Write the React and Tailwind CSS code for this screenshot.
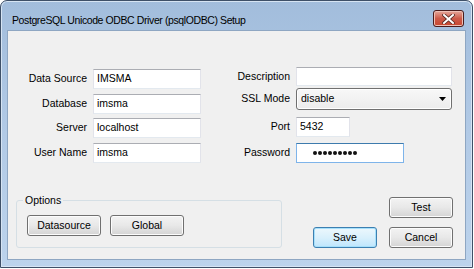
import React from 'react';

const font = { fontFamily: '"Liberation Sans", Arial, sans-serif' };

function TextBox({ value, className = '', focused = false, password = false }) {
    return (
        <div
            className={`h-[20px] bg-white border flex items-center px-[3px] text-[10.5px] text-black ${
                focused
                    ? 'border-[#7eb4ea] border-t-[#3d7bad]'
                    : 'border-[#e2e3ea] border-t-[#abadb3] border-b-[#e3e9ef]'
            } ${className}`}
        >
            {password ? (
                <div className="flex gap-[1px] pl-[13px]">
                    {[0, 1, 2, 3, 4, 5, 6, 7, 8].map((i) => (
                        <div key={i} className="w-[4px] h-[4px] rounded-full bg-[#111]" />
                    ))}
                </div>
            ) : (
                value
            )}
        </div>
    );
}

function WinButton({ children, className = '', isDefault = false }) {
    return (
        <div
            className={`h-[21px] rounded-[3px] border flex items-center justify-center text-[10.5px] text-black ${
                isDefault
                    ? 'border-[#3c7fb1] bg-gradient-to-b from-[#ecf7fd] via-[#d9f0fc] to-[#bee6fd] shadow-[inset_0_0_0_1px_#a6e0fb]'
                    : 'border-[#707070] bg-gradient-to-b from-[#f3f3f3] via-[#e8e8e8] to-[#d4d4d4] shadow-[inset_0_0_0_1px_#fcfcfc]'
            } ${className}`}
        >
            {children}
        </div>
    );
}

function Row({ label, children, labelWidth, className = '' }) {
    return (
        <div className={`flex items-center ${className}`}>
            <div className="text-right text-[10.5px] text-black shrink-0" style={{ width: labelWidth }}>
                {label}
            </div>
            {children}
        </div>
    );
}

export default function App() {
    return (
        <div className="w-[474px] h-[269px] bg-white" style={font}>
            <div className="w-[473px] h-[268px] rounded-t-[7px] border border-[#3e5068] bg-gradient-to-b from-[#a2bddc] via-[#b2cae6] to-[#bcd3ec] shadow-[inset_0_0_0_1px_#d6e4f3] flex flex-col px-[6px] pb-[7px]">
                {/* title bar */}
                <div className="h-[29px] flex items-start pl-[5px] pr-[2px]">
                    <div className="text-[10.5px] leading-[13px] tracking-[-0.4px] text-black mt-[13px]">
                        PostgreSQL Unicode ODBC Driver (psqlODBC) Setup
                    </div>
                    <div className="ml-auto mt-[9px] w-[31px] h-[17px] rounded-[3px] border border-[#4a1c1c] bg-gradient-to-b from-[#e4a89c] via-[#cc5a49] to-[#c8462e] shadow-[inset_0_0_0_1px_#eec0b6] flex items-center justify-center">
                        <svg width="13" height="10" viewBox="0 0 13 10">
                            <path d="M2 1 L11 9 M11 1 L2 9" stroke="#5a2a24" strokeWidth="3.6" strokeLinecap="square" />
                            <path d="M2 1 L11 9 M11 1 L2 9" stroke="#ffffff" strokeWidth="2" strokeLinecap="square" />
                        </svg>
                    </div>
                </div>

                {/* client area */}
                <div className="flex-1 bg-[#f0f0f0] border border-[#8ea6c2] flex flex-col">
                    <div className="flex pt-[36px]">
                        {/* left fields */}
                        <div className="flex flex-col pt-[2px] gap-[4.5px]">
                            <Row label="Data Source" labelWidth={79}>
                                <TextBox value="IMSMA" className="ml-[6px] w-[108px]" />
                            </Row>
                            <Row label="Database" labelWidth={79}>
                                <TextBox value="imsma" className="ml-[6px] w-[108px]" />
                            </Row>
                            <Row label="Server" labelWidth={79}>
                                <TextBox value="localhost" className="ml-[6px] w-[108px]" />
                            </Row>
                            <Row label="User Name" labelWidth={79}>
                                <TextBox value="imsma" className="ml-[6px] w-[108px]" />
                            </Row>
                        </div>
                        {/* right fields */}
                        <div className="flex flex-col">
                            <Row label="Description" labelWidth={89}>
                                <TextBox value="" className="ml-[6px] w-[156px] !h-[19px]" />
                            </Row>
                            <Row label="SSL Mode" labelWidth={89} className="mt-[2px]">
                                <div className="ml-[6px] w-[156px] h-[22px] rounded-[3px] border border-[#707070] bg-gradient-to-b from-[#f8f8f8] to-[#ececec] shadow-[inset_0_0_0_1px_#ffffff] flex items-center pl-[4px] pr-[5px] text-[10.5px] text-black">
                                    disable
                                    <svg className="ml-auto" width="7" height="4" viewBox="0 0 7 4">
                                        <path d="M0 0 H7 L3.5 4 Z" fill="#000" />
                                    </svg>
                                </div>
                            </Row>
                            <Row label="Port" labelWidth={89} className="mt-[7px]">
                                <TextBox value="5432" className="ml-[6px] w-[54px]" />
                            </Row>
                            <Row label="Password" labelWidth={89} className="mt-[6px]">
                                <TextBox focused password className="ml-[6px] w-[108px]" />
                            </Row>
                        </div>
                    </div>

                    {/* bottom */}
                    <div className="flex mt-[34px]">
                        <div className="relative ml-[8px] mt-[3px] w-[266px] h-[48px] rounded-[3px] border border-[#d5dfe5] flex items-start gap-[9px] pl-[10px] pt-[14px]">
                            <div className="absolute left-[6px] top-[-8px] px-[2px] bg-[#f0f0f0] text-[10.5px] text-black leading-[14px]">
                                Options
                            </div>
                            <WinButton className="w-[74px]">Datasource</WinButton>
                            <WinButton className="w-[74px]">Global</WinButton>
                        </div>
                        <div className="ml-auto mr-[12px] flex flex-col items-end">
                            <WinButton className="w-[64px]">Test</WinButton>
                            <div className="flex gap-[12px] mt-[9px]">
                                <WinButton isDefault className="w-[64px]">Save</WinButton>
                                <WinButton className="w-[64px]">Cancel</WinButton>
                            </div>
                        </div>
                    </div>
                </div>
            </div>
        </div>
    );
}
